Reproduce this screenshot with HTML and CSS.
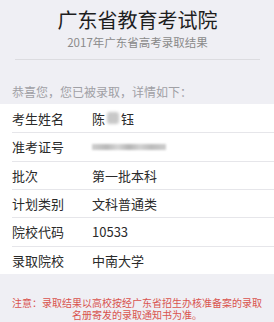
FILE: index.html
```html
<!DOCTYPE html>
<html lang="zh-CN">
<head>
<meta charset="utf-8">
<link rel="stylesheet" href="styles.css">
</head>
<body>
<div class="page">
  <header class="head">
    <h1 class="title">广东省教育考试院</h1>
    <p class="subtitle">2017年广东省高考录取结果</p>
  </header>
  <p class="notice">恭喜您，您已被录取，详情如下：</p>
  <div class="table">
    <div class="row"><span class="label">考生姓名</span><span class="value">陈<span class="blur-char"></span>钰</span></div>
    <div class="row"><span class="label">准考证号</span><span class="value"><span class="blur-num"></span></span></div>
    <div class="row"><span class="label">批次</span><span class="value">第一批本科</span></div>
    <div class="row"><span class="label">计划类别</span><span class="value">文科普通类</span></div>
    <div class="row"><span class="label">院校代码</span><span class="value">10533</span></div>
    <div class="row"><span class="label">录取院校</span><span class="value">中南大学</span></div>
  </div>
  <p class="footnote">注意：录取结果以高校按经广东省招生办核准备案的录取名册寄发的录取通知书为准。</p>
</div>
</body>
</html>
```
FILE: styles.css
```css
* { box-sizing: border-box; }
html, body { margin: 0; padding: 0; }
body {
  background: #efeff4;
  font-family: "Noto Sans CJK SC", "Noto Sans", sans-serif;
  width: 274px;
}
.page { display: flex; flex-direction: column; }
.head {
  margin: 0 14px 0 15px;
  padding-top: 6px;
  padding-bottom: 9px;
  border-bottom: 1px solid #dcdce0;
  text-align: center;
}
.title {
  margin: 0;
  font-size: 20px;
  font-weight: 400;
  line-height: 28px;
  color: #1e1e1e;
}
.subtitle {
  margin: 0;
  font-size: 11.5px;
  line-height: 16px;
  color: #8a8a8a;
}
.notice {
  margin: 0;
  padding: 24px 12px 4px;
  font-size: 12px;
  line-height: 16px;
  color: #a0a0a5;
}
.table {
  background: #fff;
  padding-left: 12px;
}
.row {
  display: flex;
  align-items: center;
  height: 28.33px;
  border-top: 1px solid #e6e6ea;
  font-size: 13px;
  color: #2a2a2a;
}
.row:first-child { border-top: none; }
.label { width: 80px; flex: none; }
.value { display: flex; align-items: center; }
.blur-char {
  display: inline-block;
  width: 12px;
  height: 12px;
  margin: 0 2px;
  background: #c8c8c8;
  border-radius: 3px;
  filter: blur(1.5px);
}
.blur-num {
  display: inline-block;
  width: 74px;
  height: 6px;
  background: linear-gradient(90deg, #cfcfcf 0%, #b9b9b9 20%, #d6d6d6 35%, #b5b5b5 50%, #d2d2d2 65%, #bcbcbc 80%, #cdcdcd 100%);
  filter: blur(1px);
}
.footnote {
  margin: 0;
  padding: 23px 10px 0;
  font-size: 10px;
  line-height: 12.5px;
  color: #d9534f;
  text-align: center;
}
```
